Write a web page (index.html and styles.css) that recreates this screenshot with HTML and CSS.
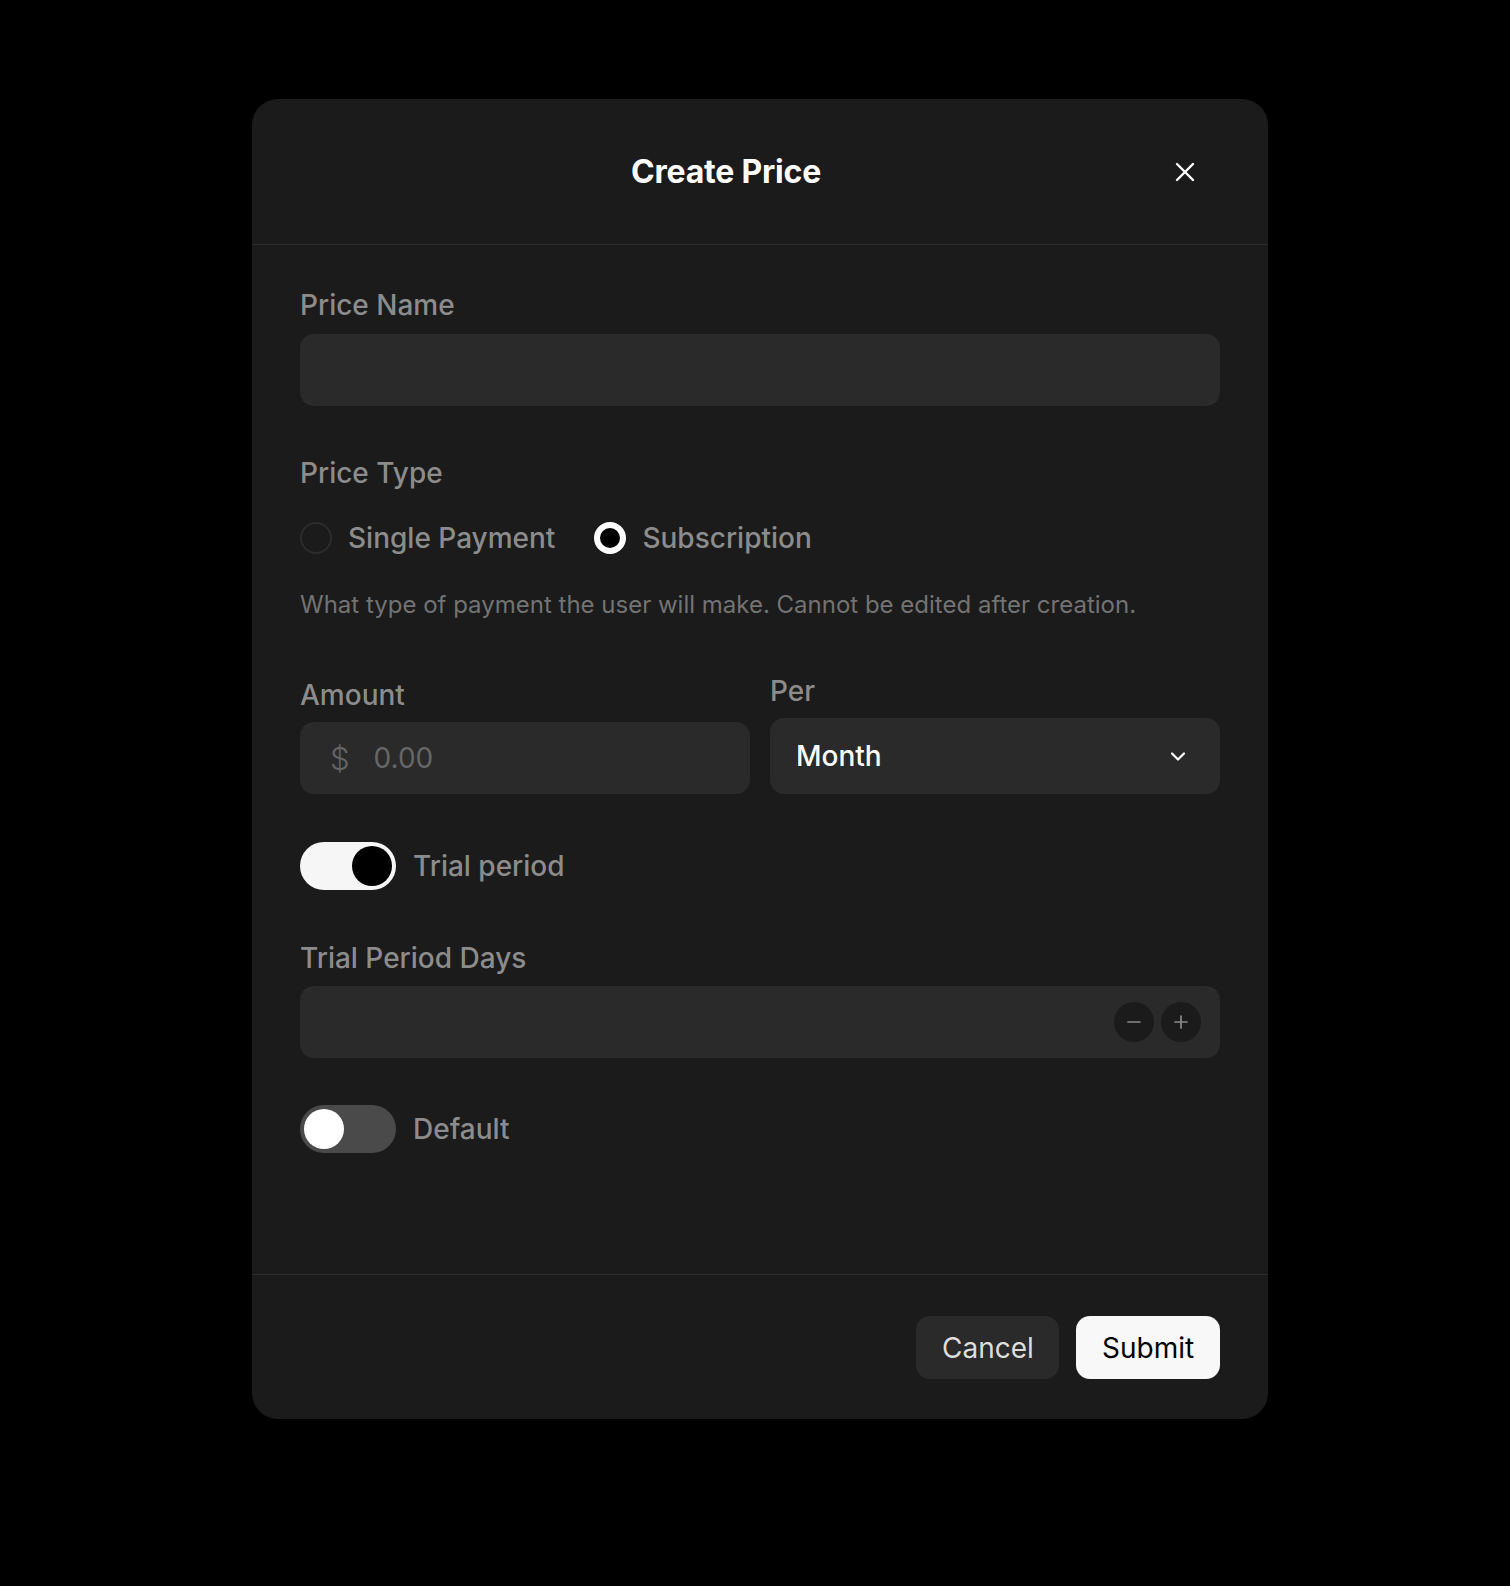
FILE: index.html
```html
<!DOCTYPE html>
<html>
<head>
  <title>Create Price</title>
  <link rel="stylesheet" href="styles.css">
</head>
<body>
  <div class="modal">
    <div class="modal-header">
      <h2 class="modal-title">Create Price</h2>
      <button class="close-btn" aria-label="Close">
        <svg width="22" height="22" viewBox="0 0 22 22" fill="none" stroke="#fff" stroke-width="2.4" stroke-linecap="round">
          <path d="M3 3 L19 19 M19 3 L3 19" />
        </svg>
      </button>
    </div>

    <div class="modal-body">
      <div class="field">
        <label class="label">Price Name</label>
        <div class="input"></div>
      </div>

      <div class="field field-type">
        <label class="label">Price Type</label>
        <div class="radio-row">
          <div class="radio-item">
            <span class="radio"></span>
            <span class="radio-text">Single Payment</span>
          </div>
          <div class="radio-item">
            <span class="radio checked"></span>
            <span class="radio-text">Subscription</span>
          </div>
        </div>
        <p class="help">What type of payment the user will make. Cannot be edited after creation.</p>
      </div>

      <div class="two-col">
        <div class="field">
          <label class="label">Amount</label>
          <div class="input amount">
            <span class="currency">$</span>
            <span class="placeholder">0.00</span>
          </div>
        </div>
        <div class="field">
          <label class="label">Per</label>
          <div class="input select">
            <span class="select-value">Month</span>
            <svg width="20" height="20" viewBox="0 0 20 20" fill="none" stroke="#fff" stroke-width="2.2" stroke-linecap="round" stroke-linejoin="round">
              <path d="M4 7.5 L10 13.5 L16 7.5" />
            </svg>
          </div>
        </div>
      </div>

      <div class="toggle-row">
        <span class="toggle on"><span class="knob"></span></span>
        <span class="toggle-text">Trial period</span>
      </div>

      <div class="field field-days">
        <label class="label">Trial Period Days</label>
        <div class="input stepper">
          <button class="step-btn" aria-label="Decrease">
            <svg width="14" height="14" viewBox="0 0 14 14" stroke="#8a8a8a" stroke-width="1.7" stroke-linecap="round">
              <path d="M1 7 H13" />
            </svg>
          </button>
          <button class="step-btn" aria-label="Increase">
            <svg width="14" height="14" viewBox="0 0 14 14" stroke="#8a8a8a" stroke-width="1.7" stroke-linecap="round">
              <path d="M1 7 H13 M7 1 V13" />
            </svg>
          </button>
        </div>
      </div>

      <div class="toggle-row toggle-default">
        <span class="toggle"><span class="knob"></span></span>
        <span class="toggle-text">Default</span>
      </div>
    </div>

    <div class="modal-footer">
      <button class="btn btn-cancel">Cancel</button>
      <button class="btn btn-submit">Submit</button>
    </div>
  </div>
</body>
</html>
```

FILE: styles.css
```css
* {
  margin: 0;
  padding: 0;
  box-sizing: border-box;
}

body {
  font-family: Inter, "Noto Sans", sans-serif;
  background-color: #000;
  padding: 99px 0 166px 252px;
}

.modal {
  width: 1016px;
  background-color: #1b1b1b;
  border-radius: 26px;
}

.modal-header {
  height: 146px;
  border-bottom: 1px solid #2c2c2c;
  display: flex;
  align-items: center;
  padding-right: 72px;
}

.modal-title {
  flex: 1;
  text-align: center;
  padding-left: 26px;
  font-size: 32px;
  font-weight: 700;
  color: #fff;
  letter-spacing: -0.2px;
}

.close-btn {
  background: none;
  border: none;
  width: 22px;
  height: 22px;
  display: flex;
  margin-top: 0;
}

.modal-body {
  padding: 43px 48px 121px;
}

.field {
  display: flex;
  flex-direction: column;
  gap: 12px;
}

.label {
  font-size: 28px;
  font-weight: 500;
  line-height: 34px;
  color: #8c8c8c;
}

.input {
  height: 72px;
  background-color: #2a2a2a;
  border-radius: 14px;
}

.field-type {
  margin-top: 50px;
  gap: 0;
}

.radio-row {
  display: flex;
  align-items: center;
  gap: 39px;
  margin-top: 31px;
  height: 34px;
}

.radio-item {
  display: flex;
  align-items: center;
  gap: 16px;
}

.radio {
  width: 32px;
  height: 32px;
  border-radius: 50%;
  border: 2px solid #2c2c2c;
}

.radio.checked {
  border: 6px solid #fff;
  background-color: #000;
}

.radio-text {
  font-size: 28px;
  font-weight: 500;
  color: #8c8c8c;
}

.help {
  font-size: 24px;
  line-height: 29px;
  color: #737373;
  margin-top: 35px;
}

.two-col {
  display: grid;
  grid-template-columns: 1fr 1fr;
  gap: 20px;
  align-items: end;
  margin-top: 55px;
}

.two-col .field {
  gap: 10px;
}

.amount {
  display: flex;
  align-items: center;
  padding-left: 30px;
  gap: 24px;
  font-size: 28px;
  color: #666;
}

.currency {
  font-size: 31px;
  font-weight: 300;
}

.select {
  height: 76px;
  display: flex;
  align-items: center;
  justify-content: space-between;
  padding: 0 32px 0 26px;
}

.select-value {
  font-size: 28px;
  color: #fff;
  font-weight: 500;
}

.toggle-row {
  display: flex;
  align-items: center;
  gap: 17px;
  margin-top: 48px;
}

.toggle {
  width: 96px;
  height: 48px;
  border-radius: 24px;
  background-color: #4a4a4a;
  display: flex;
  align-items: center;
  padding: 4px;
}

.knob {
  width: 40px;
  height: 40px;
  border-radius: 50%;
  background-color: #fff;
}

.toggle.on {
  background-color: #f6f6f6;
  justify-content: flex-end;
}

.toggle.on .knob {
  background-color: #000;
}

.toggle-text {
  font-size: 28px;
  font-weight: 500;
  color: #8c8c8c;
}

.field-days {
  margin-top: 51px;
  gap: 11px;
}

.stepper {
  display: flex;
  align-items: center;
  justify-content: flex-end;
  gap: 7px;
  padding-right: 19px;
}

.step-btn {
  width: 40px;
  height: 40px;
  border-radius: 50%;
  border: none;
  background-color: #1b1b1b;
  display: flex;
  align-items: center;
  justify-content: center;
}

.toggle-default {
  margin-top: 47px;
}

.modal-footer {
  border-top: 1px solid #2c2c2c;
  display: flex;
  justify-content: flex-end;
  gap: 17px;
  padding: 41px 48px 40px;
}

.btn {
  height: 63px;
  border: none;
  border-radius: 14px;
  font-family: Inter, "Noto Sans", sans-serif;
  font-size: 28px;
  padding: 0 26px;
}

.btn-cancel {
  background-color: #2a2a2a;
  color: #ddd;
  width: 143px;
}

.btn-submit {
  background-color: #f8f8f8;
  color: #000;
  width: 144px;
}
```
